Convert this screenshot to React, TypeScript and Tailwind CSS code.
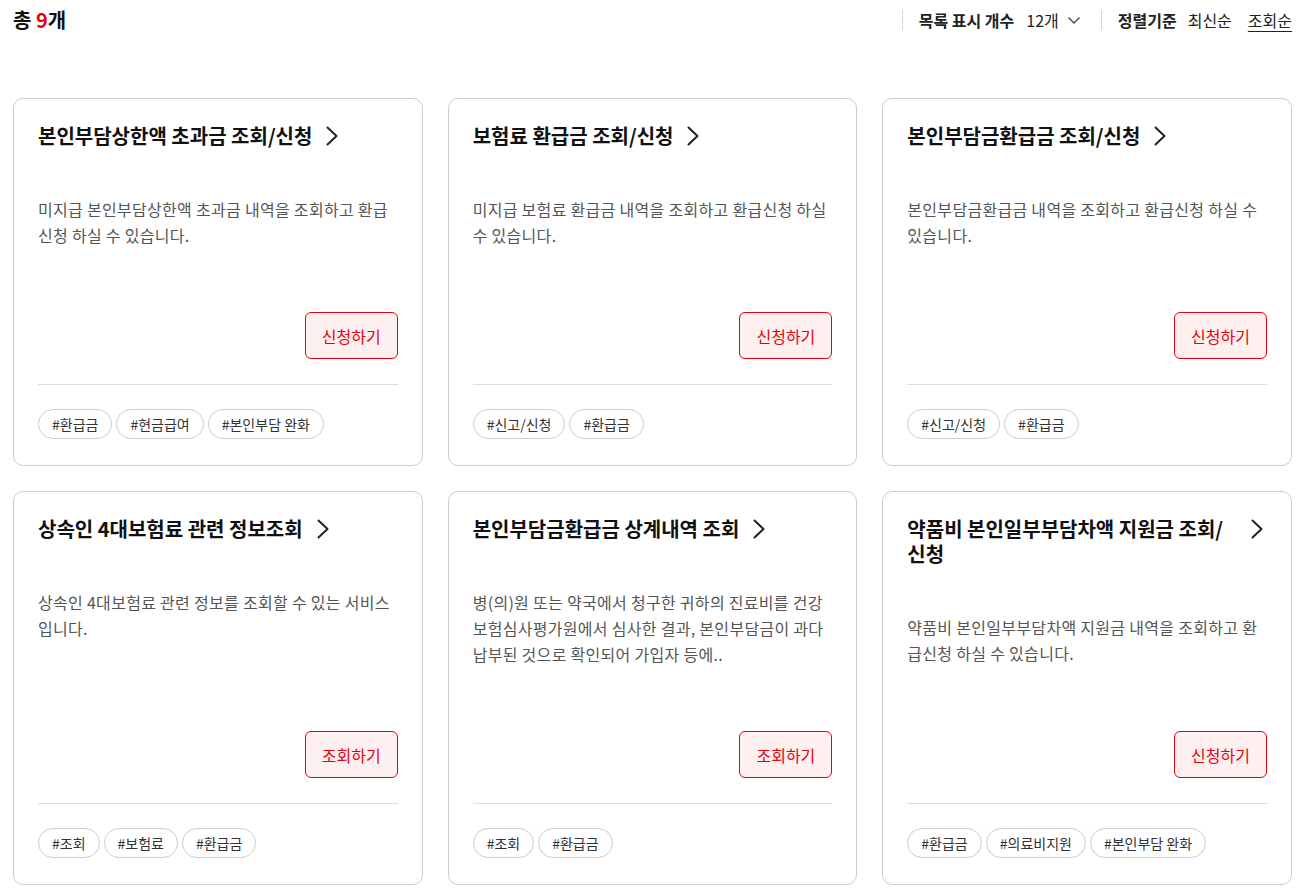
import React from "react";

type Service = {
  title: string;
  desc: string;
  action: string;
  tags: string[];
};

const services: Service[] = [
  {
    title: "본인부담상한액 초과금 조회/신청",
    desc: "미지급 본인부담상한액 초과금 내역을 조회하고 환급신청 하실 수 있습니다.",
    action: "신청하기",
    tags: ["#환급금", "#현금급여", "#본인부담 완화"],
  },
  {
    title: "보험료 환급금 조회/신청",
    desc: "미지급 보험료 환급금 내역을 조회하고 환급신청 하실 수 있습니다.",
    action: "신청하기",
    tags: ["#신고/신청", "#환급금"],
  },
  {
    title: "본인부담금환급금 조회/신청",
    desc: "본인부담금환급금 내역을 조회하고 환급신청 하실 수 있습니다.",
    action: "신청하기",
    tags: ["#신고/신청", "#환급금"],
  },
  {
    title: "상속인 4대보험료 관련 정보조회",
    desc: "상속인 4대보험료 관련 정보를 조회할 수 있는 서비스입니다.",
    action: "조회하기",
    tags: ["#조회", "#보험료", "#환급금"],
  },
  {
    title: "본인부담금환급금 상계내역 조회",
    desc: "병(의)원 또는 약국에서 청구한 귀하의 진료비를 건강보험심사평가원에서 심사한 결과, 본인부담금이 과다납부된 것으로 확인되어 가입자 등에..",
    action: "조회하기",
    tags: ["#조회", "#환급금"],
  },
  {
    title: "약품비 본인일부부담차액 지원금 조회/신청",
    desc: "약품비 본인일부부담차액 지원금 내역을 조회하고 환급신청 하실 수 있습니다.",
    action: "신청하기",
    tags: ["#환급금", "#의료비지원", "#본인부담 완화"],
  },
];

function Chevron() {
  return (
    <svg width="20" height="20" viewBox="0 0 20 20" className="shrink-0 mt-[3px]" fill="none">
      <path d="M5.5 1.5 L14.5 10 L5.5 18.5" stroke="#222" strokeWidth="2" strokeLinecap="round" strokeLinejoin="round" />
    </svg>
  );
}

function ServiceCard({ item }: { item: Service }) {
  return (
    <div className="flex flex-col border border-[#cccccc] rounded-[10px] bg-white px-6 pt-6 pb-[26px]">
      <div className="flex items-start gap-[10px]">
        <h3 className="text-[20px] leading-[25px] font-bold text-[#111]">{item.title}</h3>
        <Chevron />
      </div>
      <p className="mt-[48px] text-[16px] leading-[26px] tracking-[0.3px] text-[#555]">{item.desc}</p>
      <div className="mt-auto pt-[64px] flex justify-end">
        <button className="h-[47px] px-[16px] rounded-[6px] border border-[#e60012] bg-[#fff0f0] text-[16px] text-[#e60012]">
          {item.action}
        </button>
      </div>
      <div className="mt-[25px] border-t border-[#dddddd]" />
      <div className="mt-[24px] flex flex-wrap gap-1">
        {item.tags.map((t) => (
          <span
            key={t}
            className="h-[30px] px-[13px] flex items-center rounded-full border border-[#cccccc] text-[14px] text-[#333]"
          >
            {t}
          </span>
        ))}
      </div>
    </div>
  );
}

export default function App() {
  return (
    <div
      className="min-h-screen bg-white pl-[13px] pr-[15px]"
      style={{ fontFamily: '"Noto Sans CJK KR", "Noto Sans", sans-serif' }}
    >
      <div className="flex items-center justify-between h-[40px]">
        <div className="text-[20px] font-bold text-[#111]">
          총 <span className="text-[#e60012]">9</span>개
        </div>
        <div className="flex items-center text-[16px] text-[#222]">
          <span className="w-px h-[20px] bg-[#d5d5d5] mr-4" />
          <span className="font-bold">목록 표시 개수</span>
          <span className="ml-[12px]">12개</span>
          <svg width="14" height="14" viewBox="0 0 14 14" className="ml-[8px]" fill="none">
            <path d="M1.5 4.5 L7 10 L12.5 4.5" stroke="#444" strokeWidth="1.4" />
          </svg>
          <span className="w-px h-[20px] bg-[#d5d5d5] ml-[20px] mr-4" />
          <span className="font-bold">정렬기준</span>
          <span className="ml-[11px]">최신순</span>
          <span className="ml-4 underline underline-offset-4">조회순</span>
        </div>
      </div>
      <div className="mt-[58px] grid grid-cols-3 gap-[25px] pb-4">
        {services.map((s) => (
          <ServiceCard key={s.title} item={s} />
        ))}
      </div>
    </div>
  );
}
